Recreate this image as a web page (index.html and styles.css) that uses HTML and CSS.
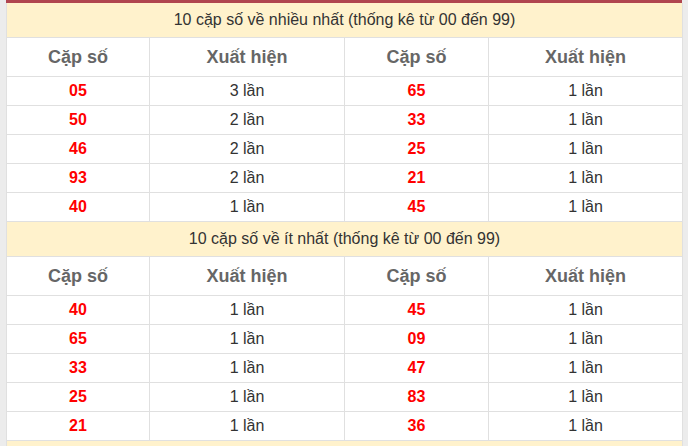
FILE: index.html
```html
<!DOCTYPE html>
<html lang="vi">
<head>
<meta charset="utf-8">
<link rel="stylesheet" href="styles.css">
</head>
<body>
<div class="wrap">
<table class="stats">
  <colgroup>
    <col class="c1"><col class="c2"><col class="c3"><col class="c4">
  </colgroup>
  <tr><td colspan="4" class="title">10 cặp số về nhiều nhất (thống kê từ 00 đến 99)</td></tr>
  <tr class="head"><th>Cặp số</th><th>Xuất hiện</th><th>Cặp số</th><th>Xuất hiện</th></tr>
  <tr><td class="num">05</td><td>3 lần</td><td class="num">65</td><td>1 lần</td></tr>
  <tr><td class="num">50</td><td>2 lần</td><td class="num">33</td><td>1 lần</td></tr>
  <tr><td class="num">46</td><td>2 lần</td><td class="num">25</td><td>1 lần</td></tr>
  <tr><td class="num">93</td><td>2 lần</td><td class="num">21</td><td>1 lần</td></tr>
  <tr><td class="num">40</td><td>1 lần</td><td class="num">45</td><td>1 lần</td></tr>
  <tr><td colspan="4" class="title">10 cặp số về ít nhất (thống kê từ 00 đến 99)</td></tr>
  <tr class="head"><th>Cặp số</th><th>Xuất hiện</th><th>Cặp số</th><th>Xuất hiện</th></tr>
  <tr><td class="num">40</td><td>1 lần</td><td class="num">45</td><td>1 lần</td></tr>
  <tr><td class="num">65</td><td>1 lần</td><td class="num">09</td><td>1 lần</td></tr>
  <tr><td class="num">33</td><td>1 lần</td><td class="num">47</td><td>1 lần</td></tr>
  <tr><td class="num">25</td><td>1 lần</td><td class="num">83</td><td>1 lần</td></tr>
  <tr><td class="num">21</td><td>1 lần</td><td class="num">36</td><td>1 lần</td></tr>
  <tr><td colspan="4" class="title">&nbsp;</td></tr>
</table>
</div>
</body>
</html>
```

FILE: styles.css
```css
html, body {
  margin: 0;
  padding: 0;
  background: #ececec;
}
body {
  font-family: "Liberation Sans", Arial, sans-serif;
  color: #333;
}
.wrap {
  margin: 0 6px;
  border-top: 3px solid #b0454f;
  background: #fff;
}
.stats {
  width: 676px;
  border-collapse: collapse;
  table-layout: fixed;
}
.c1 { width: 143px; }
.c2 { width: 195px; }
.c3 { width: 144px; }
.c4 { width: 194px; }
.stats td, .stats th {
  border: 1px solid #e0e0e0;
  text-align: center;
  padding: 0;
}
.stats td {
  height: 28px;
  font-size: 16px;
}
.stats .title {
  height: 34px;
  background: #fff2cc;
  font-size: 16px;
  color: #333;
  border-top: none;
}
.stats .head th {
  height: 38px;
  font-size: 18px;
  font-weight: bold;
  color: #666;
}
.stats .num {
  color: #f00;
  font-weight: bold;
}
```
